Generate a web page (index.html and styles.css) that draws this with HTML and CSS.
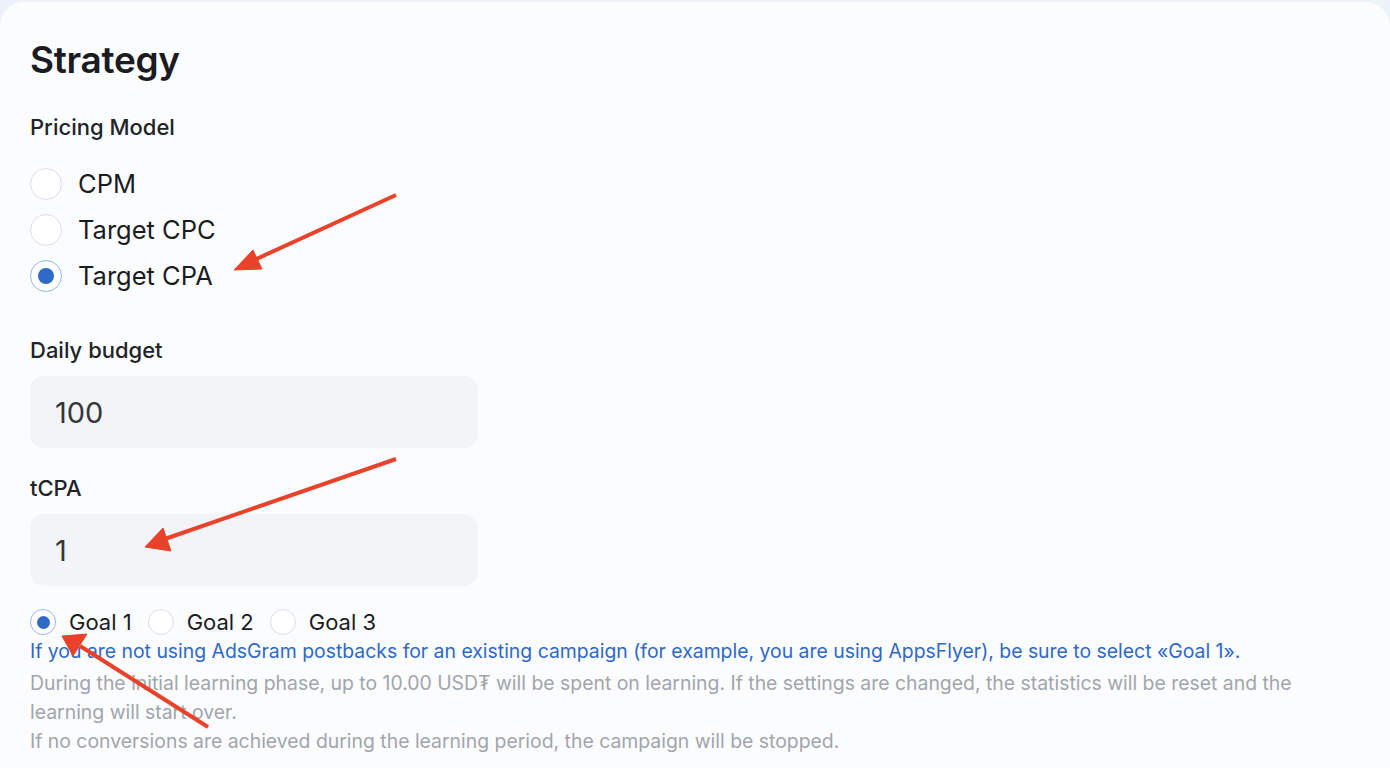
FILE: index.html
```html
<!DOCTYPE html>
<html>
<head>
<meta charset="utf-8">
<link rel="stylesheet" href="styles.css">
</head>
<body>
<div class="card">
  <h1 class="title">Strategy</h1>
  <div class="label">Pricing Model</div>
  <div class="radios">
    <label class="radio"><span class="dot"></span><span class="rtext">CPM</span></label>
    <label class="radio"><span class="dot"></span><span class="rtext">Target CPC</span></label>
    <label class="radio"><span class="dot on"></span><span class="rtext">Target CPA</span></label>
  </div>
  <div class="label label-budget">Daily budget</div>
  <div class="input">100</div>
  <div class="label label-tcpa">tCPA</div>
  <div class="input">1</div>
  <div class="goals">
    <label class="goal"><span class="gdot on"></span><span class="gtext">Goal 1</span></label>
    <label class="goal"><span class="gdot"></span><span class="gtext">Goal 2</span></label>
    <label class="goal"><span class="gdot"></span><span class="gtext">Goal 3</span></label>
  </div>
  <p class="note">If you are not using AdsGram postbacks for an existing campaign (for example, you are using AppsFlyer), be sure to select «Goal 1».</p>
  <p class="hint">During the initial learning phase, up to 10.00 USD₮ will be spent on learning. If the settings are changed, the statistics will be reset and the learning will start over.<br>If no conversions are achieved during the learning period, the campaign will be stopped.</p>
</div>
<svg class="arrows" width="1390" height="768" viewBox="0 0 1390 768">
  <g fill="#e8432a" stroke="#e8432a">
    <line x1="396" y1="195" x2="252" y2="261" stroke-width="4"/>
    <polygon points="234,270 253,250 262,269" stroke-width="1"/>
    <line x1="396" y1="459" x2="162" y2="540" stroke-width="4"/>
    <polygon points="145,547 163,528 171,551" stroke-width="1"/>
    <line x1="208" y1="727" x2="80" y2="646" stroke-width="4"/>
    <polygon points="62,636 87,634 73,656" stroke-width="1"/>
  </g>
</svg>
</body>
</html>
```
FILE: styles.css
```css
html, body {
  margin: 0;
  padding: 0;
}
body {
  background: #edf1f8;
  font-family: Inter, "Noto Sans", sans-serif;
  color: #1b1c1f;
  width: 1390px;
  height: 768px;
  overflow: hidden;
  position: relative;
}
.card {
  margin-top: 2px;
  background: #fbfcfe;
  border-radius: 24px;
  height: 800px;
  padding: 38px 30px 0;
  box-sizing: border-box;
}
.title {
  margin: 0;
  font-size: 37px;
  font-weight: 600;
  line-height: 40px;
  letter-spacing: -0.3px;
}
.label {
  font-size: 22px;
  font-weight: 500;
  line-height: 24px;
  margin-top: 35px;
  color: #222327;
}
.radios {
  display: flex;
  flex-direction: column;
  gap: 14px;
  margin-top: 29px;
}
.radio {
  display: flex;
  align-items: center;
  gap: 16px;
  height: 32px;
}
.dot {
  width: 30px;
  height: 30px;
  border: 1px solid #d9dee8;
  border-radius: 50%;
  background: #fff;
  flex: none;
  display: flex;
  align-items: center;
  justify-content: center;
}
.dot.on {
  border-color: #9bb6e6;
}
.dot.on::after {
  content: "";
  width: 16px;
  height: 16px;
  border-radius: 50%;
  background: #2f6ac9;
}
.rtext {
  font-size: 25.5px;
  line-height: 32px;
}
.label-budget {
  margin-top: 46px;
}
.label-tcpa {
  margin-top: 28px;
}
.input {
  margin-top: 14px;
  width: 448px;
  height: 72px;
  box-sizing: border-box;
  background: #f2f4f8;
  border-radius: 14px;
  padding-left: 25px;
  display: flex;
  align-items: center;
  font-size: 29px;
  color: #35373c;
}
.goals {
  display: flex;
  gap: 16px;
  margin-top: 22px;
  height: 28px;
}
.goal {
  display: flex;
  align-items: center;
  gap: 13px;
}
.gdot {
  width: 24px;
  height: 24px;
  border: 1px solid #d9dee8;
  border-radius: 50%;
  background: #fff;
  display: flex;
  align-items: center;
  justify-content: center;
}
.gdot.on {
  border-color: #9bb6e6;
}
.gdot.on::after {
  content: "";
  width: 13px;
  height: 13px;
  border-radius: 50%;
  background: #2f6ac9;
}
.gtext {
  font-size: 22px;
  line-height: 28px;
}
.note {
  margin: 2px 0 0;
  font-size: 19.4px;
  line-height: 26px;
  color: #2e68c8;
  white-space: nowrap;
}
.hint {
  margin: 5px 0 0;
  font-size: 19.4px;
  line-height: 29px;
  color: #a2a5ac;
  width: 1290px;
}
.arrows {
  position: absolute;
  left: 0;
  top: 0;
  pointer-events: none;
}
```
